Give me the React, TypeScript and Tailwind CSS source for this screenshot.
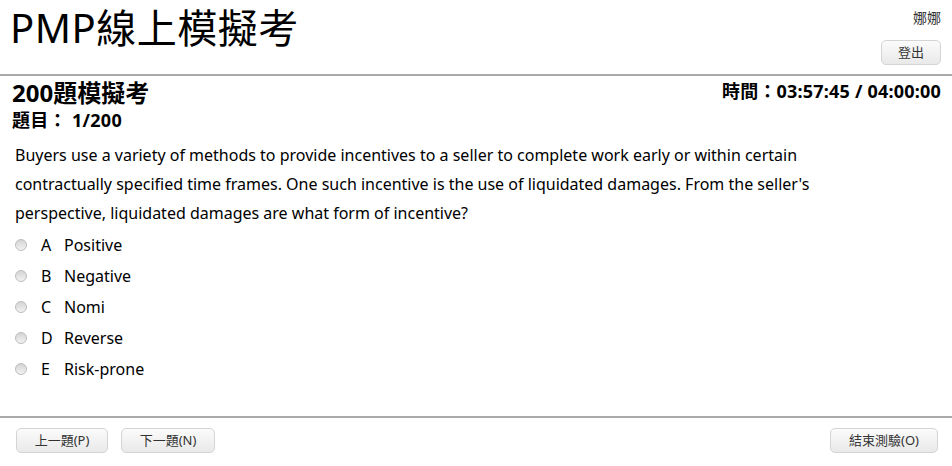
import React from "react";

const font = { fontFamily: '"Noto Sans", "Noto Sans CJK TC", sans-serif' };

const options = [
  { key: "A", text: "Positive" },
  { key: "B", text: "Negative" },
  { key: "C", text: "Nomi" },
  { key: "D", text: "Reverse" },
  { key: "E", text: "Risk-prone" },
];

function Btn({ children, className = "" }: { children: React.ReactNode; className?: string }) {
  return (
    <button
      className={
        "h-[25px] rounded-[5px] border border-[#d4d4d4] bg-gradient-to-b from-[#fbfbfb] to-[#e9e9e9] text-[13px] text-[#333] leading-none " +
        className
      }
    >
      {children}
    </button>
  );
}

export default function App() {
  return (
    <div className="w-[952px] h-[466px] bg-white text-black overflow-hidden" style={font}>
      {/* Header */}
      <div className="flex justify-between h-[74px] pl-[10px] pr-[11px]">
        <div className="text-[40px] leading-none pt-[8px] tracking-[0.5px]">PMP線上模擬考</div>
        <div className="flex flex-col items-end pt-[9px]">
          <div className="text-[14px] leading-[18px] text-[#333]">娜娜</div>
          <Btn className="mt-[13px] w-[60px]">登出</Btn>
        </div>
      </div>
      <div className="h-[2px] bg-[#a9a9a9]" />

      {/* Exam */}
      <div className="h-[340px] pl-[12px] pr-[11px]">
        <div className="flex justify-between items-start pt-[1px]">
          <div className="text-[24px] font-bold leading-[32px]">200題模擬考</div>
          <div className="text-[18px] font-bold leading-[26px] pt-[1px] tracking-[0.2px]">時間：03:57:45 / 04:00:00</div>
        </div>
        <div className="text-[18px] font-bold leading-[24px] -mt-[1px] tracking-[0.3px]">題目： 1/200</div>
        <div className="pl-[3px] pt-[9px] text-[16px] leading-[29px] pr-[100px]">
          Buyers use a variety of methods to provide incentives to a seller to complete work early or within certain
          contractually specified time frames. One such incentive is the use of liquidated damages. From the seller's
          perspective, liquidated damages are what form of incentive?
        </div>
        <div className="pt-[1px]">
          {options.map((o) => (
            <div key={o.key} className="flex items-center h-[31px] text-[16px]">
              <span className="ml-[3px] w-[12px] h-[12px] rounded-full border border-[#bdbdbd] bg-gradient-to-b from-[#d4d4d4] to-[#f2f2f2]" />
              <span className="ml-[14px] w-[23px]">{o.key}</span>
              <span>{o.text}</span>
            </div>
          ))}
        </div>
      </div>

      <div className="h-[2px] bg-[#a9a9a9]" />
      <div className="flex justify-between pt-[10px] pl-[16px] pr-[14px]">
        <div className="flex gap-[13px]">
          <Btn className="w-[92px]">上一題(P)</Btn>
          <Btn className="w-[94px]">下一題(N)</Btn>
        </div>
        <Btn className="w-[108px]">結束測驗(O)</Btn>
      </div>
    </div>
  );
}
